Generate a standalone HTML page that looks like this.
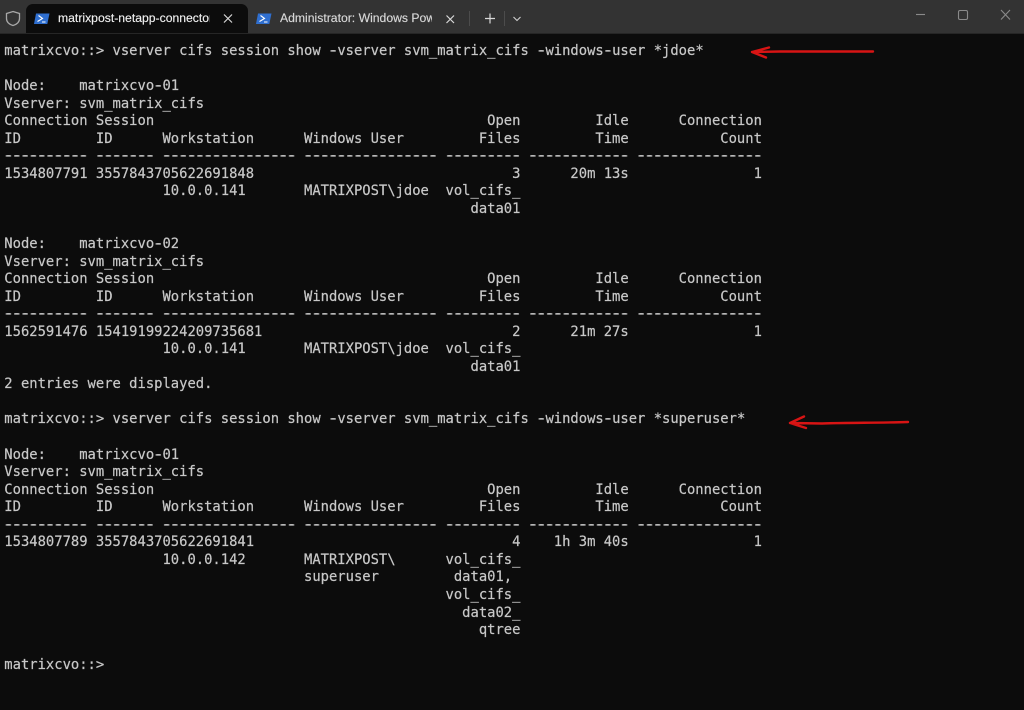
<!DOCTYPE html>
<html><head><meta charset="utf-8"><style>
html,body{margin:0;padding:0;width:1024px;height:710px;overflow:hidden;background:#0c0c0c}
#bar{position:absolute;left:0;top:0;width:1024px;height:33px;background:#333333}
#tab{position:absolute;left:26px;top:4px;width:222px;height:29px;background:#0c0c0c;border-radius:7px 7px 0 0}
.t{position:absolute;top:11px;height:16px;font:12.2px/15px "Liberation Sans",sans-serif;white-space:nowrap;overflow:hidden;-webkit-text-stroke:.15px currentColor}
pre{position:absolute;left:4.3px;top:43px;margin:0;font-family:"DejaVu Sans Mono","Liberation Mono",monospace;font-size:13.83px;line-height:17.55px;color:#c8c8c8;white-space:pre;-webkit-text-stroke:.2px #c8c8c8}
pre span{text-shadow:1px 0 #c8c8c8,-1px 0 #c8c8c8}
svg{position:absolute;left:0;top:0}
</style></head><body>
<div id="bar"></div><div id="tab"></div>
<div class="t" style="left:58px;width:152px;color:#f0f0f0">matrixpost-netapp-connector</div>
<div class="t" style="left:280px;width:152px;color:#d8d8d8">Administrator: Windows PowerShell</div>
<pre>matrixcvo::&gt; vserver cifs session show <span>-</span>vserver svm_matrix_cifs <span>-</span>windows<span>-</span>user *jdoe*

Node:    matrixcvo<span>-</span>01
Vserver: svm_matrix_cifs
Connection Session                                        Open         Idle      Connection
ID         ID      Workstation      Windows User         Files         Time           Count
<span>---------- ------- ---------------- ---------------- --------- ------------ ---------------</span>
1534807791 3557843705622691848                               3      20m 13s               1
                   10.0.0.141       MATRIXPOST\jdoe  vol_cifs_
                                                        data01

Node:    matrixcvo<span>-</span>02
Vserver: svm_matrix_cifs
Connection Session                                        Open         Idle      Connection
ID         ID      Workstation      Windows User         Files         Time           Count
<span>---------- ------- ---------------- ---------------- --------- ------------ ---------------</span>
1562591476 15419199224209735681                              2      21m 27s               1
                   10.0.0.141       MATRIXPOST\jdoe  vol_cifs_
                                                        data01
2 entries were displayed.

matrixcvo::&gt; vserver cifs session show <span>-</span>vserver svm_matrix_cifs <span>-</span>windows<span>-</span>user *superuser*

Node:    matrixcvo<span>-</span>01
Vserver: svm_matrix_cifs
Connection Session                                        Open         Idle      Connection
ID         ID      Workstation      Windows User         Files         Time           Count
<span>---------- ------- ---------------- ---------------- --------- ------------ ---------------</span>
1534807789 3557843705622691841                               4    1h 3m 40s               1
                   10.0.0.142       MATRIXPOST\      vol_cifs_
                                    superuser         data01,
                                                     vol_cifs_
                                                       data02_
                                                         qtree

matrixcvo::&gt;</pre>
<svg width="1024" height="710" viewBox="0 0 1024 710" fill="none">
<path d="M13 11.500l6.500 2v5c0 3.600-2.600 5.800-6.500 7-3.900-1.200-6.500-3.400-6.500-7v-5z" stroke="#a8a8a8" stroke-width="1.300"/>
<path d="M36 13.500h13.500l-2.200 10.500H34z" fill="#2f6fd0"/>
<path d="M38.500 15.500l4 3-5 3M42 22h3.500" stroke="#fff" stroke-width="1.100"/>
<path d="M258 13.500h13.500l-2.200 10.500H256z" fill="#2f6fd0"/>
<path d="M260.500 15.500l4 3-5 3M264 22h3.500" stroke="#fff" stroke-width="1.100"/>
<path d="M224 14.500l8 8M232 14.500l-8 8M446.500 15.500l7.500 7.500M454 15.500l-7.500 7.500" stroke="#d8d8d8" stroke-width="1.200"/>
<path d="M469.500 11v15M504.500 11v15" stroke="#4c4c4c"/>
<path d="M490 13.500v10M485 18.500h10" stroke="#d8d8d8" stroke-width="1.200"/>
<path d="M513.500 17l3.500 3.500 3.500-3.500" stroke="#d0d0d0" stroke-width="1.100"/>
<path d="M916 14.500h9" stroke="#8a8a8a" stroke-width="1.100"/>
<rect x="958.500" y="10.500" width="9" height="9" rx="1.500" stroke="#8a8a8a" stroke-width="1.100"/>
<path d="M1001 10l9 9.500M1010 10l-9 9.500" stroke="#8a8a8a" stroke-width="1.100"/>
<path d="M0 33.500h1024" stroke="#262626"/>
<path d="M873 51.500H780l-28 .5M769 47.500l-17 4.500 14 5.500" stroke="#d81414" stroke-width="2.400" stroke-linecap="round" stroke-linejoin="round"/>
<path d="M908 422c-30 1-60 .5-86 1.500l-32-.5M804 416.500l-14 6.500 16 5" stroke="#d81414" stroke-width="2.400" stroke-linecap="round" stroke-linejoin="round"/>
</svg>
</body></html>
